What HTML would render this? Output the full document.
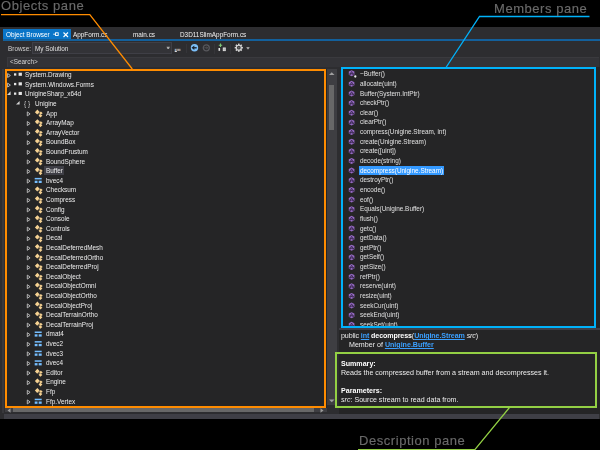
<!DOCTYPE html><html><head><meta charset="utf-8"><style>
*{margin:0;padding:0;box-sizing:border-box}
html,body{width:600px;height:450px;overflow:hidden;background:#000}
body{position:relative;font-family:"Liberation Sans",sans-serif;color:#ececec;font-size:6.4px}
.a{position:absolute}
.t{position:absolute;white-space:nowrap;line-height:10px;height:10px;transform-origin:0 0;will-change:transform}
.ann{position:absolute;white-space:nowrap;color:#6a6a6a;font-size:13px;line-height:16px;letter-spacing:0.55px;will-change:transform;-webkit-text-stroke:0.15px #6a6a6a}
</style></head><body><div class="a" style="left:0;top:27px;width:600px;height:392px;background:#2d2d30"></div>
<div class="a" style="left:2.3px;top:69px;width:1.7px;height:344px;background:#38383c"></div>
<div class="a" style="left:4px;top:413.8px;width:595px;height:5.2px;background:#3f3f46"></div>
<div class="a" style="left:3px;top:29px;width:68px;height:11.5px;background:#0a75c8"></div>
<div class="a" style="left:3px;top:39.2px;width:597px;height:1.7px;background:#13609c"></div>
<div class="t" style="left:5.7px;top:30.08px;color:#fff">Object Browser</div>
<div class="t" style="left:73.3px;top:30.08px;color:#f1f1f1">AppForm.cs</div>
<div class="t" style="left:133px;top:30.08px;color:#f1f1f1">main.cs</div>
<div class="t" style="left:179.7px;top:30.08px;color:#f1f1f1">D3D11SlimAppForm.cs</div>
<div class="t" style="left:8px;top:43.58px;color:#d0d0d0">Browse:</div>
<div class="a" style="left:32px;top:42px;width:140px;height:12px;background:#333337;border:1px solid #3f3f46"></div>
<div class="t" style="left:35px;top:43.58px;color:#e0e0e0">My Solution</div>
<div class="a" style="left:186px;top:44px;width:1px;height:9px;background:#353539"></div>
<div class="a" style="left:214.3px;top:43.5px;width:1px;height:10px;background:#353539"></div>
<div class="a" style="left:230.3px;top:43.5px;width:1px;height:10px;background:#353539"></div>
<div class="a" style="left:7px;top:56.6px;width:592px;height:10.6px;background:#333337;border-top:1px solid #3a3a3e;border-left:1px solid #3a3a3e"></div>
<div class="t" style="left:9.7px;top:57.48px;color:#d6d6d6">&lt;Search&gt;</div>
<div class="a" style="left:5px;top:69px;width:322px;height:339px;background:#252526"></div>
<div class="a" style="left:327px;top:69px;width:10px;height:339px;background:#3e3e42"></div>
<div class="a" style="left:329.3px;top:85px;width:4.7px;height:45px;background:#686868"></div>
<div class="a" style="left:5px;top:408px;width:322px;height:4.2px;background:#3e3e42"></div>
<div class="a" style="left:13px;top:408.2px;width:300.5px;height:3.8px;background:#686868"></div>
<div class="t" style="left:25px;top:70.28px;">System.Drawing</div>
<div class="t" style="left:25px;top:79.88px;">System.Windows.Forms</div>
<div class="t" style="left:25px;top:89.48px;">UnigineSharp_x64d</div>
<div class="t" style="left:23.7px;top:99.08px;color:#c8c8c8">{ }</div>
<div class="t" style="left:35.3px;top:99.08px;">Unigine</div>
<div class="t" style="left:45.7px;top:108.68px;">App</div>
<div class="t" style="left:45.7px;top:118.28px;">ArrayMap</div>
<div class="t" style="left:45.7px;top:127.88px;">ArrayVector</div>
<div class="t" style="left:45.7px;top:137.48px;">BoundBox</div>
<div class="t" style="left:45.7px;top:147.08px;">BoundFrustum</div>
<div class="t" style="left:45.7px;top:156.68px;">BoundSphere</div>
<div class="a" style="left:44.3px;top:165.7px;width:19.4px;height:9px;background:#3f3f46"></div>
<div class="t" style="left:45.7px;top:166.28px;">Buffer</div>
<div class="t" style="left:45.7px;top:175.88px;">bvec4</div>
<div class="t" style="left:45.7px;top:185.48px;">Checksum</div>
<div class="t" style="left:45.7px;top:195.08px;">Compress</div>
<div class="t" style="left:45.7px;top:204.68px;">Config</div>
<div class="t" style="left:45.7px;top:214.28px;">Console</div>
<div class="t" style="left:45.7px;top:223.88px;">Controls</div>
<div class="t" style="left:45.7px;top:233.48px;">Decal</div>
<div class="t" style="left:45.7px;top:243.08px;">DecalDeferredMesh</div>
<div class="t" style="left:45.7px;top:252.68px;">DecalDeferredOrtho</div>
<div class="t" style="left:45.7px;top:262.28px;">DecalDeferredProj</div>
<div class="t" style="left:45.7px;top:271.88px;">DecalObject</div>
<div class="t" style="left:45.7px;top:281.48px;">DecalObjectOmni</div>
<div class="t" style="left:45.7px;top:291.08px;">DecalObjectOrtho</div>
<div class="t" style="left:45.7px;top:300.68px;">DecalObjectProj</div>
<div class="t" style="left:45.7px;top:310.28px;">DecalTerrainOrtho</div>
<div class="t" style="left:45.7px;top:319.88px;">DecalTerrainProj</div>
<div class="t" style="left:45.7px;top:329.48px;">dmat4</div>
<div class="t" style="left:45.7px;top:339.08px;">dvec2</div>
<div class="t" style="left:45.7px;top:348.68px;">dvec3</div>
<div class="t" style="left:45.7px;top:358.28px;">dvec4</div>
<div class="t" style="left:45.7px;top:367.88px;">Editor</div>
<div class="t" style="left:45.7px;top:377.48px;">Engine</div>
<div class="t" style="left:45.7px;top:387.08px;">Ffp</div>
<div class="t" style="left:45.7px;top:396.68px;">Ffp.Vertex</div>
<div class="a" style="left:341px;top:67px;width:259px;height:261px;background:#252526"></div>
<div class="t" style="left:360px;top:69.28px;color:#e0e0e0">~Buffer()</div>
<div class="t" style="left:360px;top:78.92px;color:#e0e0e0">allocate(uint)</div>
<div class="t" style="left:360px;top:88.56px;color:#e0e0e0">Buffer(System.IntPtr)</div>
<div class="t" style="left:360px;top:98.20px;color:#e0e0e0">checkPtr()</div>
<div class="t" style="left:360px;top:107.84px;color:#e0e0e0">clear()</div>
<div class="t" style="left:360px;top:117.48px;color:#e0e0e0">clearPtr()</div>
<div class="t" style="left:360px;top:127.12px;color:#e0e0e0">compress(Unigine.Stream, int)</div>
<div class="t" style="left:360px;top:136.76px;color:#e0e0e0">create(Unigine.Stream)</div>
<div class="t" style="left:360px;top:146.40px;color:#e0e0e0">create([uint])</div>
<div class="t" style="left:360px;top:156.04px;color:#e0e0e0">decode(string)</div>
<div class="a" style="left:359px;top:165.7px;width:84.8px;height:9.5px;background:#3399ff"></div>
<div class="t" style="left:360px;top:165.68px;color:#fff">decompress(Unigine.Stream)</div>
<div class="t" style="left:360px;top:175.32px;color:#e0e0e0">destroyPtr()</div>
<div class="t" style="left:360px;top:184.96px;color:#e0e0e0">encode()</div>
<div class="t" style="left:360px;top:194.60px;color:#e0e0e0">eof()</div>
<div class="t" style="left:360px;top:204.24px;color:#e0e0e0">Equals(Unigine.Buffer)</div>
<div class="t" style="left:360px;top:213.88px;color:#e0e0e0">flush()</div>
<div class="t" style="left:360px;top:223.52px;color:#e0e0e0">getc()</div>
<div class="t" style="left:360px;top:233.16px;color:#e0e0e0">getData()</div>
<div class="t" style="left:360px;top:242.80px;color:#e0e0e0">getPtr()</div>
<div class="t" style="left:360px;top:252.44px;color:#e0e0e0">getSelf()</div>
<div class="t" style="left:360px;top:262.08px;color:#e0e0e0">getSize()</div>
<div class="t" style="left:360px;top:271.72px;color:#e0e0e0">refPtr()</div>
<div class="t" style="left:360px;top:281.36px;color:#e0e0e0">reserve(uint)</div>
<div class="t" style="left:360px;top:291.00px;color:#e0e0e0">resize(uint)</div>
<div class="t" style="left:360px;top:300.64px;color:#e0e0e0">seekCur(uint)</div>
<div class="t" style="left:360px;top:310.28px;color:#e0e0e0">seekEnd(uint)</div>
<div class="t" style="left:360px;top:319.92px;color:#e0e0e0">seekSet(uint)</div>
<div class="a" style="left:338.6px;top:328.2px;width:261.4px;height:1.6px;background:#3f3f46"></div>
<div class="a" style="left:338.6px;top:329.8px;width:261.4px;height:84px;background:#252526"></div>
<div class="a" style="left:327px;top:330px;width:8px;height:75px;background:#3e3e42"></div>
<div class="a" style="left:327px;top:405px;width:8px;height:8.8px;background:#2d2d30"></div>
<div class="t" style="left:340.5px;top:331.04px;font-size:7.1px;letter-spacing:-0.1px">public <b style="color:#3ba0ff;text-decoration:underline">int</b> <b style="color:#fff">decompress</b>(<b style="color:#3ba0ff;text-decoration:underline">Unigine.Stream</b> <i>src</i>)</div>
<div class="t" style="left:349px;top:339.54px;font-size:7.1px;">Member of <b style="color:#3ba0ff;text-decoration:underline">Unigine.Buffer</b></div>
<div class="t" style="left:340.5px;top:358.74px;font-size:7.1px;"><b style="color:#fff">Summary:</b></div>
<div class="t" style="left:340.5px;top:368.04px;font-size:7.1px;">Reads the compressed buffer from a stream and decompresses it.</div>
<div class="t" style="left:340.5px;top:385.79px;font-size:7.1px;"><b style="color:#fff">Parameters:</b></div>
<div class="t" style="left:340.5px;top:394.94px;font-size:7.1px;"><i>src</i>: Source stream to read data from.</div>
<svg class="a" style="left:0;top:0" width="600" height="450"><g transform="translate(52.00 31.00)"><path d="M1.2 3.2H3.5" stroke="#fff" stroke-width="0.9"/><rect x="3.5" y="1.8" width="2.7" height="2.7" stroke="#fff" stroke-width="0.9" fill="none"/><path d="M11.5 1.5L16 6M16 1.5L11.5 6" stroke="#fff" stroke-width="1.1"/></g><g transform="translate(166.50 46.60)"><path d="M0 0.2H3.4L2.4 2.5H1Z" fill="#a8a8a8"/></g><g transform="translate(174.70 48.80)"><rect x="0" y="0" width="1.6" height="2.2" fill="#7d9bbd"/><rect x="1.6" y="0" width="1.5" height="2.2" fill="#a58e7a"/><rect x="3.1" y="0" width="1.3" height="2.2" fill="#8e969e"/><rect x="4.4" y="0" width="1.4" height="2.2" fill="#a89080"/><rect x="0" y="2.2" width="2.2" height="1" fill="#d8d8d8"/></g><g transform="translate(190.00 44.00)"><circle cx="4.5" cy="3.8" r="3.7" fill="#7cc0fa"/><path d="M1.5 3.8L4.3 1.5V6.1Z" fill="#1a2430"/><rect x="4" y="3.1" width="2.7" height="1.4" fill="#1a2430"/></g><g transform="translate(202.00 44.00)"><circle cx="4.3" cy="3.8" r="3.0" fill="none" stroke="#58585c" stroke-width="1.3"/><path d="M6.4 3.8L4.3 2.2V5.4Z" fill="#505054"/><rect x="2.3" y="3.3" width="2.2" height="1" fill="#505054"/></g><g transform="translate(217.00 43.00)"><path d="M3.5 0.6V4M1.8 2.3H5.2" stroke="#7cc576" stroke-width="1.1"/><rect x="1.5" y="5" width="1.6" height="2.8" fill="#e8e8e8"/><rect x="5.8" y="4.5" width="3" height="3.6" fill="#e0e0e0"/><path d="M5.8 6.3H8.8M7.3 4.5V8.1" stroke="#9a9a9a" stroke-width="0.4"/></g><g transform="translate(234.30 43.20)"><g fill="#d4d4d4"><circle cx="4.5" cy="4.5" r="3"/><rect x="3.7" y="0.4" width="1.6" height="8.2"/><rect x="0.4" y="3.7" width="8.2" height="1.6"/><rect x="3.7" y="0.4" width="1.6" height="8.2" transform="rotate(45 4.5 4.5)"/><rect x="3.7" y="0.4" width="1.6" height="8.2" transform="rotate(-45 4.5 4.5)"/></g><circle cx="4.5" cy="4.5" r="1.9" fill="#3a3a3c"/><circle cx="4.5" cy="4.5" r="0.8" fill="#777"/></g><g transform="translate(246.30 46.80)"><path d="M0 0.2H3.4L2.4 2.4H1Z" fill="#9a9a9a"/></g><g transform="translate(329.00 72.00)"><path d="M0 3L2.75 0.3L5.5 3Z" fill="#a0a0a0"/></g><g transform="translate(7.00 408.00)"><path d="M3.5 0.2V4.8L0.5 2.5Z" fill="#999"/></g><g transform="translate(320.00 408.00)"><path d="M0.5 0.2V4.8L3.5 2.5Z" fill="#999"/></g><g transform="translate(7.00 72.90)"><path d="M0.6 0.6L3.4 2.6L0.6 4.6Z" fill="none" stroke="#b4b4b4" stroke-width="1"/></g><g transform="translate(14.00 72.70)"><rect x="0" y="0.6" width="2.3" height="2.3" fill="#e4e4e4"/><rect x="4.6" y="0" width="3.3" height="3.1" fill="#e4e4e4"/></g><g transform="translate(7.00 82.50)"><path d="M0.6 0.6L3.4 2.6L0.6 4.6Z" fill="none" stroke="#b4b4b4" stroke-width="1"/></g><g transform="translate(14.00 82.30)"><rect x="0" y="0.6" width="2.3" height="2.3" fill="#e4e4e4"/><rect x="4.6" y="0" width="3.3" height="3.1" fill="#e4e4e4"/></g><g transform="translate(6.80 91.10)"><path d="M3.8 0.2V3.8H0.2Z" fill="#d4d4d4"/></g><g transform="translate(14.00 91.90)"><rect x="0" y="0.6" width="2.3" height="2.3" fill="#e4e4e4"/><rect x="4.6" y="0" width="3.3" height="3.1" fill="#e4e4e4"/></g><g transform="translate(15.80 100.70)"><path d="M3.8 0.2V3.8H0.2Z" fill="#d4d4d4"/></g><g transform="translate(26.70 111.30)"><path d="M0.6 0.6L3.4 2.6L0.6 4.6Z" fill="none" stroke="#b4b4b4" stroke-width="1"/></g><g transform="translate(34.70 109.40)"><path d="M0.2 2.8L2.7 0.2L5 2.6L2.5 5.2Z" fill="#f6d292"/><path d="M4.4 3.6L6.2 2.2L8 3.9L6.2 5.2Z" fill="#f6d292"/><path d="M3.9 6.1L5.7 4.6L7.7 6.3L5.6 8.2Z" fill="#f6d292"/><path d="M3.6 4.2L5.4 5.6" stroke="#b89a6a" stroke-width="0.7"/></g><g transform="translate(26.70 120.90)"><path d="M0.6 0.6L3.4 2.6L0.6 4.6Z" fill="none" stroke="#b4b4b4" stroke-width="1"/></g><g transform="translate(34.70 119.00)"><path d="M0.2 2.8L2.7 0.2L5 2.6L2.5 5.2Z" fill="#f6d292"/><path d="M4.4 3.6L6.2 2.2L8 3.9L6.2 5.2Z" fill="#f6d292"/><path d="M3.9 6.1L5.7 4.6L7.7 6.3L5.6 8.2Z" fill="#f6d292"/><path d="M3.6 4.2L5.4 5.6" stroke="#b89a6a" stroke-width="0.7"/></g><g transform="translate(26.70 130.50)"><path d="M0.6 0.6L3.4 2.6L0.6 4.6Z" fill="none" stroke="#b4b4b4" stroke-width="1"/></g><g transform="translate(34.70 128.60)"><path d="M0.2 2.8L2.7 0.2L5 2.6L2.5 5.2Z" fill="#f6d292"/><path d="M4.4 3.6L6.2 2.2L8 3.9L6.2 5.2Z" fill="#f6d292"/><path d="M3.9 6.1L5.7 4.6L7.7 6.3L5.6 8.2Z" fill="#f6d292"/><path d="M3.6 4.2L5.4 5.6" stroke="#b89a6a" stroke-width="0.7"/></g><g transform="translate(26.70 140.10)"><path d="M0.6 0.6L3.4 2.6L0.6 4.6Z" fill="none" stroke="#b4b4b4" stroke-width="1"/></g><g transform="translate(34.70 138.20)"><path d="M0.2 2.8L2.7 0.2L5 2.6L2.5 5.2Z" fill="#f6d292"/><path d="M4.4 3.6L6.2 2.2L8 3.9L6.2 5.2Z" fill="#f6d292"/><path d="M3.9 6.1L5.7 4.6L7.7 6.3L5.6 8.2Z" fill="#f6d292"/><path d="M3.6 4.2L5.4 5.6" stroke="#b89a6a" stroke-width="0.7"/></g><g transform="translate(26.70 149.70)"><path d="M0.6 0.6L3.4 2.6L0.6 4.6Z" fill="none" stroke="#b4b4b4" stroke-width="1"/></g><g transform="translate(34.70 147.80)"><path d="M0.2 2.8L2.7 0.2L5 2.6L2.5 5.2Z" fill="#f6d292"/><path d="M4.4 3.6L6.2 2.2L8 3.9L6.2 5.2Z" fill="#f6d292"/><path d="M3.9 6.1L5.7 4.6L7.7 6.3L5.6 8.2Z" fill="#f6d292"/><path d="M3.6 4.2L5.4 5.6" stroke="#b89a6a" stroke-width="0.7"/></g><g transform="translate(26.70 159.30)"><path d="M0.6 0.6L3.4 2.6L0.6 4.6Z" fill="none" stroke="#b4b4b4" stroke-width="1"/></g><g transform="translate(34.70 157.40)"><path d="M0.2 2.8L2.7 0.2L5 2.6L2.5 5.2Z" fill="#f6d292"/><path d="M4.4 3.6L6.2 2.2L8 3.9L6.2 5.2Z" fill="#f6d292"/><path d="M3.9 6.1L5.7 4.6L7.7 6.3L5.6 8.2Z" fill="#f6d292"/><path d="M3.6 4.2L5.4 5.6" stroke="#b89a6a" stroke-width="0.7"/></g><g transform="translate(26.70 168.90)"><path d="M0.6 0.6L3.4 2.6L0.6 4.6Z" fill="none" stroke="#b4b4b4" stroke-width="1"/></g><g transform="translate(34.70 167.00)"><path d="M0.2 2.8L2.7 0.2L5 2.6L2.5 5.2Z" fill="#f6d292"/><path d="M4.4 3.6L6.2 2.2L8 3.9L6.2 5.2Z" fill="#f6d292"/><path d="M3.9 6.1L5.7 4.6L7.7 6.3L5.6 8.2Z" fill="#f6d292"/><path d="M3.6 4.2L5.4 5.6" stroke="#b89a6a" stroke-width="0.7"/></g><g transform="translate(26.70 178.50)"><path d="M0.6 0.6L3.4 2.6L0.6 4.6Z" fill="none" stroke="#b4b4b4" stroke-width="1"/></g><g transform="translate(34.70 177.70)"><rect x="0" y="0.2" width="7" height="1.5" fill="#75beff"/><rect x="0" y="3" width="2.8" height="2.3" fill="#75beff"/><rect x="4" y="3" width="3" height="2.3" fill="#75beff"/></g><g transform="translate(26.70 188.10)"><path d="M0.6 0.6L3.4 2.6L0.6 4.6Z" fill="none" stroke="#b4b4b4" stroke-width="1"/></g><g transform="translate(34.70 186.20)"><path d="M0.2 2.8L2.7 0.2L5 2.6L2.5 5.2Z" fill="#f6d292"/><path d="M4.4 3.6L6.2 2.2L8 3.9L6.2 5.2Z" fill="#f6d292"/><path d="M3.9 6.1L5.7 4.6L7.7 6.3L5.6 8.2Z" fill="#f6d292"/><path d="M3.6 4.2L5.4 5.6" stroke="#b89a6a" stroke-width="0.7"/></g><g transform="translate(26.70 197.70)"><path d="M0.6 0.6L3.4 2.6L0.6 4.6Z" fill="none" stroke="#b4b4b4" stroke-width="1"/></g><g transform="translate(34.70 195.80)"><path d="M0.2 2.8L2.7 0.2L5 2.6L2.5 5.2Z" fill="#f6d292"/><path d="M4.4 3.6L6.2 2.2L8 3.9L6.2 5.2Z" fill="#f6d292"/><path d="M3.9 6.1L5.7 4.6L7.7 6.3L5.6 8.2Z" fill="#f6d292"/><path d="M3.6 4.2L5.4 5.6" stroke="#b89a6a" stroke-width="0.7"/></g><g transform="translate(26.70 207.30)"><path d="M0.6 0.6L3.4 2.6L0.6 4.6Z" fill="none" stroke="#b4b4b4" stroke-width="1"/></g><g transform="translate(34.70 205.40)"><path d="M0.2 2.8L2.7 0.2L5 2.6L2.5 5.2Z" fill="#f6d292"/><path d="M4.4 3.6L6.2 2.2L8 3.9L6.2 5.2Z" fill="#f6d292"/><path d="M3.9 6.1L5.7 4.6L7.7 6.3L5.6 8.2Z" fill="#f6d292"/><path d="M3.6 4.2L5.4 5.6" stroke="#b89a6a" stroke-width="0.7"/></g><g transform="translate(26.70 216.90)"><path d="M0.6 0.6L3.4 2.6L0.6 4.6Z" fill="none" stroke="#b4b4b4" stroke-width="1"/></g><g transform="translate(34.70 215.00)"><path d="M0.2 2.8L2.7 0.2L5 2.6L2.5 5.2Z" fill="#f6d292"/><path d="M4.4 3.6L6.2 2.2L8 3.9L6.2 5.2Z" fill="#f6d292"/><path d="M3.9 6.1L5.7 4.6L7.7 6.3L5.6 8.2Z" fill="#f6d292"/><path d="M3.6 4.2L5.4 5.6" stroke="#b89a6a" stroke-width="0.7"/></g><g transform="translate(26.70 226.50)"><path d="M0.6 0.6L3.4 2.6L0.6 4.6Z" fill="none" stroke="#b4b4b4" stroke-width="1"/></g><g transform="translate(34.70 224.60)"><path d="M0.2 2.8L2.7 0.2L5 2.6L2.5 5.2Z" fill="#f6d292"/><path d="M4.4 3.6L6.2 2.2L8 3.9L6.2 5.2Z" fill="#f6d292"/><path d="M3.9 6.1L5.7 4.6L7.7 6.3L5.6 8.2Z" fill="#f6d292"/><path d="M3.6 4.2L5.4 5.6" stroke="#b89a6a" stroke-width="0.7"/></g><g transform="translate(26.70 236.10)"><path d="M0.6 0.6L3.4 2.6L0.6 4.6Z" fill="none" stroke="#b4b4b4" stroke-width="1"/></g><g transform="translate(34.70 234.20)"><path d="M0.2 2.8L2.7 0.2L5 2.6L2.5 5.2Z" fill="#f6d292"/><path d="M4.4 3.6L6.2 2.2L8 3.9L6.2 5.2Z" fill="#f6d292"/><path d="M3.9 6.1L5.7 4.6L7.7 6.3L5.6 8.2Z" fill="#f6d292"/><path d="M3.6 4.2L5.4 5.6" stroke="#b89a6a" stroke-width="0.7"/></g><g transform="translate(26.70 245.70)"><path d="M0.6 0.6L3.4 2.6L0.6 4.6Z" fill="none" stroke="#b4b4b4" stroke-width="1"/></g><g transform="translate(34.70 243.80)"><path d="M0.2 2.8L2.7 0.2L5 2.6L2.5 5.2Z" fill="#f6d292"/><path d="M4.4 3.6L6.2 2.2L8 3.9L6.2 5.2Z" fill="#f6d292"/><path d="M3.9 6.1L5.7 4.6L7.7 6.3L5.6 8.2Z" fill="#f6d292"/><path d="M3.6 4.2L5.4 5.6" stroke="#b89a6a" stroke-width="0.7"/></g><g transform="translate(26.70 255.30)"><path d="M0.6 0.6L3.4 2.6L0.6 4.6Z" fill="none" stroke="#b4b4b4" stroke-width="1"/></g><g transform="translate(34.70 253.40)"><path d="M0.2 2.8L2.7 0.2L5 2.6L2.5 5.2Z" fill="#f6d292"/><path d="M4.4 3.6L6.2 2.2L8 3.9L6.2 5.2Z" fill="#f6d292"/><path d="M3.9 6.1L5.7 4.6L7.7 6.3L5.6 8.2Z" fill="#f6d292"/><path d="M3.6 4.2L5.4 5.6" stroke="#b89a6a" stroke-width="0.7"/></g><g transform="translate(26.70 264.90)"><path d="M0.6 0.6L3.4 2.6L0.6 4.6Z" fill="none" stroke="#b4b4b4" stroke-width="1"/></g><g transform="translate(34.70 263.00)"><path d="M0.2 2.8L2.7 0.2L5 2.6L2.5 5.2Z" fill="#f6d292"/><path d="M4.4 3.6L6.2 2.2L8 3.9L6.2 5.2Z" fill="#f6d292"/><path d="M3.9 6.1L5.7 4.6L7.7 6.3L5.6 8.2Z" fill="#f6d292"/><path d="M3.6 4.2L5.4 5.6" stroke="#b89a6a" stroke-width="0.7"/></g><g transform="translate(26.70 274.50)"><path d="M0.6 0.6L3.4 2.6L0.6 4.6Z" fill="none" stroke="#b4b4b4" stroke-width="1"/></g><g transform="translate(34.70 272.60)"><path d="M0.2 2.8L2.7 0.2L5 2.6L2.5 5.2Z" fill="#f6d292"/><path d="M4.4 3.6L6.2 2.2L8 3.9L6.2 5.2Z" fill="#f6d292"/><path d="M3.9 6.1L5.7 4.6L7.7 6.3L5.6 8.2Z" fill="#f6d292"/><path d="M3.6 4.2L5.4 5.6" stroke="#b89a6a" stroke-width="0.7"/></g><g transform="translate(26.70 284.10)"><path d="M0.6 0.6L3.4 2.6L0.6 4.6Z" fill="none" stroke="#b4b4b4" stroke-width="1"/></g><g transform="translate(34.70 282.20)"><path d="M0.2 2.8L2.7 0.2L5 2.6L2.5 5.2Z" fill="#f6d292"/><path d="M4.4 3.6L6.2 2.2L8 3.9L6.2 5.2Z" fill="#f6d292"/><path d="M3.9 6.1L5.7 4.6L7.7 6.3L5.6 8.2Z" fill="#f6d292"/><path d="M3.6 4.2L5.4 5.6" stroke="#b89a6a" stroke-width="0.7"/></g><g transform="translate(26.70 293.70)"><path d="M0.6 0.6L3.4 2.6L0.6 4.6Z" fill="none" stroke="#b4b4b4" stroke-width="1"/></g><g transform="translate(34.70 291.80)"><path d="M0.2 2.8L2.7 0.2L5 2.6L2.5 5.2Z" fill="#f6d292"/><path d="M4.4 3.6L6.2 2.2L8 3.9L6.2 5.2Z" fill="#f6d292"/><path d="M3.9 6.1L5.7 4.6L7.7 6.3L5.6 8.2Z" fill="#f6d292"/><path d="M3.6 4.2L5.4 5.6" stroke="#b89a6a" stroke-width="0.7"/></g><g transform="translate(26.70 303.30)"><path d="M0.6 0.6L3.4 2.6L0.6 4.6Z" fill="none" stroke="#b4b4b4" stroke-width="1"/></g><g transform="translate(34.70 301.40)"><path d="M0.2 2.8L2.7 0.2L5 2.6L2.5 5.2Z" fill="#f6d292"/><path d="M4.4 3.6L6.2 2.2L8 3.9L6.2 5.2Z" fill="#f6d292"/><path d="M3.9 6.1L5.7 4.6L7.7 6.3L5.6 8.2Z" fill="#f6d292"/><path d="M3.6 4.2L5.4 5.6" stroke="#b89a6a" stroke-width="0.7"/></g><g transform="translate(26.70 312.90)"><path d="M0.6 0.6L3.4 2.6L0.6 4.6Z" fill="none" stroke="#b4b4b4" stroke-width="1"/></g><g transform="translate(34.70 311.00)"><path d="M0.2 2.8L2.7 0.2L5 2.6L2.5 5.2Z" fill="#f6d292"/><path d="M4.4 3.6L6.2 2.2L8 3.9L6.2 5.2Z" fill="#f6d292"/><path d="M3.9 6.1L5.7 4.6L7.7 6.3L5.6 8.2Z" fill="#f6d292"/><path d="M3.6 4.2L5.4 5.6" stroke="#b89a6a" stroke-width="0.7"/></g><g transform="translate(26.70 322.50)"><path d="M0.6 0.6L3.4 2.6L0.6 4.6Z" fill="none" stroke="#b4b4b4" stroke-width="1"/></g><g transform="translate(34.70 320.60)"><path d="M0.2 2.8L2.7 0.2L5 2.6L2.5 5.2Z" fill="#f6d292"/><path d="M4.4 3.6L6.2 2.2L8 3.9L6.2 5.2Z" fill="#f6d292"/><path d="M3.9 6.1L5.7 4.6L7.7 6.3L5.6 8.2Z" fill="#f6d292"/><path d="M3.6 4.2L5.4 5.6" stroke="#b89a6a" stroke-width="0.7"/></g><g transform="translate(26.70 332.10)"><path d="M0.6 0.6L3.4 2.6L0.6 4.6Z" fill="none" stroke="#b4b4b4" stroke-width="1"/></g><g transform="translate(34.70 331.30)"><rect x="0" y="0.2" width="7" height="1.5" fill="#75beff"/><rect x="0" y="3" width="2.8" height="2.3" fill="#75beff"/><rect x="4" y="3" width="3" height="2.3" fill="#75beff"/></g><g transform="translate(26.70 341.70)"><path d="M0.6 0.6L3.4 2.6L0.6 4.6Z" fill="none" stroke="#b4b4b4" stroke-width="1"/></g><g transform="translate(34.70 340.90)"><rect x="0" y="0.2" width="7" height="1.5" fill="#75beff"/><rect x="0" y="3" width="2.8" height="2.3" fill="#75beff"/><rect x="4" y="3" width="3" height="2.3" fill="#75beff"/></g><g transform="translate(26.70 351.30)"><path d="M0.6 0.6L3.4 2.6L0.6 4.6Z" fill="none" stroke="#b4b4b4" stroke-width="1"/></g><g transform="translate(34.70 350.50)"><rect x="0" y="0.2" width="7" height="1.5" fill="#75beff"/><rect x="0" y="3" width="2.8" height="2.3" fill="#75beff"/><rect x="4" y="3" width="3" height="2.3" fill="#75beff"/></g><g transform="translate(26.70 360.90)"><path d="M0.6 0.6L3.4 2.6L0.6 4.6Z" fill="none" stroke="#b4b4b4" stroke-width="1"/></g><g transform="translate(34.70 360.10)"><rect x="0" y="0.2" width="7" height="1.5" fill="#75beff"/><rect x="0" y="3" width="2.8" height="2.3" fill="#75beff"/><rect x="4" y="3" width="3" height="2.3" fill="#75beff"/></g><g transform="translate(26.70 370.50)"><path d="M0.6 0.6L3.4 2.6L0.6 4.6Z" fill="none" stroke="#b4b4b4" stroke-width="1"/></g><g transform="translate(34.70 368.60)"><path d="M0.2 2.8L2.7 0.2L5 2.6L2.5 5.2Z" fill="#f6d292"/><path d="M4.4 3.6L6.2 2.2L8 3.9L6.2 5.2Z" fill="#f6d292"/><path d="M3.9 6.1L5.7 4.6L7.7 6.3L5.6 8.2Z" fill="#f6d292"/><path d="M3.6 4.2L5.4 5.6" stroke="#b89a6a" stroke-width="0.7"/></g><g transform="translate(26.70 380.10)"><path d="M0.6 0.6L3.4 2.6L0.6 4.6Z" fill="none" stroke="#b4b4b4" stroke-width="1"/></g><g transform="translate(34.70 378.20)"><path d="M0.2 2.8L2.7 0.2L5 2.6L2.5 5.2Z" fill="#f6d292"/><path d="M4.4 3.6L6.2 2.2L8 3.9L6.2 5.2Z" fill="#f6d292"/><path d="M3.9 6.1L5.7 4.6L7.7 6.3L5.6 8.2Z" fill="#f6d292"/><path d="M3.6 4.2L5.4 5.6" stroke="#b89a6a" stroke-width="0.7"/></g><g transform="translate(26.70 389.70)"><path d="M0.6 0.6L3.4 2.6L0.6 4.6Z" fill="none" stroke="#b4b4b4" stroke-width="1"/></g><g transform="translate(34.70 387.80)"><path d="M0.2 2.8L2.7 0.2L5 2.6L2.5 5.2Z" fill="#f6d292"/><path d="M4.4 3.6L6.2 2.2L8 3.9L6.2 5.2Z" fill="#f6d292"/><path d="M3.9 6.1L5.7 4.6L7.7 6.3L5.6 8.2Z" fill="#f6d292"/><path d="M3.6 4.2L5.4 5.6" stroke="#b89a6a" stroke-width="0.7"/></g><g transform="translate(26.70 399.30)"><path d="M0.6 0.6L3.4 2.6L0.6 4.6Z" fill="none" stroke="#b4b4b4" stroke-width="1"/></g><g transform="translate(34.70 398.50)"><rect x="0" y="0.2" width="7" height="1.5" fill="#75beff"/><rect x="0" y="3" width="2.8" height="2.3" fill="#75beff"/><rect x="4" y="3" width="3" height="2.3" fill="#75beff"/></g><g transform="translate(348.60 70.10)"><path d="M3 0.1L5.8 1.5V4.6L3 6.1L0.2 4.6V1.5Z" fill="#966ac4"/><path d="M1.5 4.1L3 1.4L4.5 4.1" stroke="#3a2850" stroke-width="0.9" fill="none"/><circle cx="1.5" cy="4" r="0.85" fill="#3a2850"/><circle cx="4.5" cy="4" r="0.85" fill="#3a2850"/><circle cx="3" cy="3.6" r="0.6" fill="#3a2850"/></g><g transform="translate(348.60 80.74)"><path d="M3 0.1L5.8 1.5V4.6L3 6.1L0.2 4.6V1.5Z" fill="#966ac4"/><path d="M1.5 4.1L3 1.4L4.5 4.1" stroke="#3a2850" stroke-width="0.9" fill="none"/><circle cx="1.5" cy="4" r="0.85" fill="#3a2850"/><circle cx="4.5" cy="4" r="0.85" fill="#3a2850"/><circle cx="3" cy="3.6" r="0.6" fill="#3a2850"/></g><g transform="translate(348.60 90.38)"><path d="M3 0.1L5.8 1.5V4.6L3 6.1L0.2 4.6V1.5Z" fill="#966ac4"/><path d="M1.5 4.1L3 1.4L4.5 4.1" stroke="#3a2850" stroke-width="0.9" fill="none"/><circle cx="1.5" cy="4" r="0.85" fill="#3a2850"/><circle cx="4.5" cy="4" r="0.85" fill="#3a2850"/><circle cx="3" cy="3.6" r="0.6" fill="#3a2850"/></g><g transform="translate(348.60 100.02)"><path d="M3 0.1L5.8 1.5V4.6L3 6.1L0.2 4.6V1.5Z" fill="#966ac4"/><path d="M1.5 4.1L3 1.4L4.5 4.1" stroke="#3a2850" stroke-width="0.9" fill="none"/><circle cx="1.5" cy="4" r="0.85" fill="#3a2850"/><circle cx="4.5" cy="4" r="0.85" fill="#3a2850"/><circle cx="3" cy="3.6" r="0.6" fill="#3a2850"/></g><g transform="translate(348.60 109.66)"><path d="M3 0.1L5.8 1.5V4.6L3 6.1L0.2 4.6V1.5Z" fill="#966ac4"/><path d="M1.5 4.1L3 1.4L4.5 4.1" stroke="#3a2850" stroke-width="0.9" fill="none"/><circle cx="1.5" cy="4" r="0.85" fill="#3a2850"/><circle cx="4.5" cy="4" r="0.85" fill="#3a2850"/><circle cx="3" cy="3.6" r="0.6" fill="#3a2850"/></g><g transform="translate(348.60 119.30)"><path d="M3 0.1L5.8 1.5V4.6L3 6.1L0.2 4.6V1.5Z" fill="#966ac4"/><path d="M1.5 4.1L3 1.4L4.5 4.1" stroke="#3a2850" stroke-width="0.9" fill="none"/><circle cx="1.5" cy="4" r="0.85" fill="#3a2850"/><circle cx="4.5" cy="4" r="0.85" fill="#3a2850"/><circle cx="3" cy="3.6" r="0.6" fill="#3a2850"/></g><g transform="translate(348.60 128.94)"><path d="M3 0.1L5.8 1.5V4.6L3 6.1L0.2 4.6V1.5Z" fill="#966ac4"/><path d="M1.5 4.1L3 1.4L4.5 4.1" stroke="#3a2850" stroke-width="0.9" fill="none"/><circle cx="1.5" cy="4" r="0.85" fill="#3a2850"/><circle cx="4.5" cy="4" r="0.85" fill="#3a2850"/><circle cx="3" cy="3.6" r="0.6" fill="#3a2850"/></g><g transform="translate(348.60 138.58)"><path d="M3 0.1L5.8 1.5V4.6L3 6.1L0.2 4.6V1.5Z" fill="#966ac4"/><path d="M1.5 4.1L3 1.4L4.5 4.1" stroke="#3a2850" stroke-width="0.9" fill="none"/><circle cx="1.5" cy="4" r="0.85" fill="#3a2850"/><circle cx="4.5" cy="4" r="0.85" fill="#3a2850"/><circle cx="3" cy="3.6" r="0.6" fill="#3a2850"/></g><g transform="translate(348.60 148.22)"><path d="M3 0.1L5.8 1.5V4.6L3 6.1L0.2 4.6V1.5Z" fill="#966ac4"/><path d="M1.5 4.1L3 1.4L4.5 4.1" stroke="#3a2850" stroke-width="0.9" fill="none"/><circle cx="1.5" cy="4" r="0.85" fill="#3a2850"/><circle cx="4.5" cy="4" r="0.85" fill="#3a2850"/><circle cx="3" cy="3.6" r="0.6" fill="#3a2850"/></g><g transform="translate(348.60 157.86)"><path d="M3 0.1L5.8 1.5V4.6L3 6.1L0.2 4.6V1.5Z" fill="#966ac4"/><path d="M1.5 4.1L3 1.4L4.5 4.1" stroke="#3a2850" stroke-width="0.9" fill="none"/><circle cx="1.5" cy="4" r="0.85" fill="#3a2850"/><circle cx="4.5" cy="4" r="0.85" fill="#3a2850"/><circle cx="3" cy="3.6" r="0.6" fill="#3a2850"/></g><g transform="translate(348.60 167.50)"><path d="M3 0.1L5.8 1.5V4.6L3 6.1L0.2 4.6V1.5Z" fill="#966ac4"/><path d="M1.5 4.1L3 1.4L4.5 4.1" stroke="#3a2850" stroke-width="0.9" fill="none"/><circle cx="1.5" cy="4" r="0.85" fill="#3a2850"/><circle cx="4.5" cy="4" r="0.85" fill="#3a2850"/><circle cx="3" cy="3.6" r="0.6" fill="#3a2850"/></g><g transform="translate(348.60 177.14)"><path d="M3 0.1L5.8 1.5V4.6L3 6.1L0.2 4.6V1.5Z" fill="#966ac4"/><path d="M1.5 4.1L3 1.4L4.5 4.1" stroke="#3a2850" stroke-width="0.9" fill="none"/><circle cx="1.5" cy="4" r="0.85" fill="#3a2850"/><circle cx="4.5" cy="4" r="0.85" fill="#3a2850"/><circle cx="3" cy="3.6" r="0.6" fill="#3a2850"/></g><g transform="translate(348.60 186.78)"><path d="M3 0.1L5.8 1.5V4.6L3 6.1L0.2 4.6V1.5Z" fill="#966ac4"/><path d="M1.5 4.1L3 1.4L4.5 4.1" stroke="#3a2850" stroke-width="0.9" fill="none"/><circle cx="1.5" cy="4" r="0.85" fill="#3a2850"/><circle cx="4.5" cy="4" r="0.85" fill="#3a2850"/><circle cx="3" cy="3.6" r="0.6" fill="#3a2850"/></g><g transform="translate(348.60 196.42)"><path d="M3 0.1L5.8 1.5V4.6L3 6.1L0.2 4.6V1.5Z" fill="#966ac4"/><path d="M1.5 4.1L3 1.4L4.5 4.1" stroke="#3a2850" stroke-width="0.9" fill="none"/><circle cx="1.5" cy="4" r="0.85" fill="#3a2850"/><circle cx="4.5" cy="4" r="0.85" fill="#3a2850"/><circle cx="3" cy="3.6" r="0.6" fill="#3a2850"/></g><g transform="translate(348.60 206.06)"><path d="M3 0.1L5.8 1.5V4.6L3 6.1L0.2 4.6V1.5Z" fill="#966ac4"/><path d="M1.5 4.1L3 1.4L4.5 4.1" stroke="#3a2850" stroke-width="0.9" fill="none"/><circle cx="1.5" cy="4" r="0.85" fill="#3a2850"/><circle cx="4.5" cy="4" r="0.85" fill="#3a2850"/><circle cx="3" cy="3.6" r="0.6" fill="#3a2850"/></g><g transform="translate(348.60 215.70)"><path d="M3 0.1L5.8 1.5V4.6L3 6.1L0.2 4.6V1.5Z" fill="#966ac4"/><path d="M1.5 4.1L3 1.4L4.5 4.1" stroke="#3a2850" stroke-width="0.9" fill="none"/><circle cx="1.5" cy="4" r="0.85" fill="#3a2850"/><circle cx="4.5" cy="4" r="0.85" fill="#3a2850"/><circle cx="3" cy="3.6" r="0.6" fill="#3a2850"/></g><g transform="translate(348.60 225.34)"><path d="M3 0.1L5.8 1.5V4.6L3 6.1L0.2 4.6V1.5Z" fill="#966ac4"/><path d="M1.5 4.1L3 1.4L4.5 4.1" stroke="#3a2850" stroke-width="0.9" fill="none"/><circle cx="1.5" cy="4" r="0.85" fill="#3a2850"/><circle cx="4.5" cy="4" r="0.85" fill="#3a2850"/><circle cx="3" cy="3.6" r="0.6" fill="#3a2850"/></g><g transform="translate(348.60 234.98)"><path d="M3 0.1L5.8 1.5V4.6L3 6.1L0.2 4.6V1.5Z" fill="#966ac4"/><path d="M1.5 4.1L3 1.4L4.5 4.1" stroke="#3a2850" stroke-width="0.9" fill="none"/><circle cx="1.5" cy="4" r="0.85" fill="#3a2850"/><circle cx="4.5" cy="4" r="0.85" fill="#3a2850"/><circle cx="3" cy="3.6" r="0.6" fill="#3a2850"/></g><g transform="translate(348.60 244.62)"><path d="M3 0.1L5.8 1.5V4.6L3 6.1L0.2 4.6V1.5Z" fill="#966ac4"/><path d="M1.5 4.1L3 1.4L4.5 4.1" stroke="#3a2850" stroke-width="0.9" fill="none"/><circle cx="1.5" cy="4" r="0.85" fill="#3a2850"/><circle cx="4.5" cy="4" r="0.85" fill="#3a2850"/><circle cx="3" cy="3.6" r="0.6" fill="#3a2850"/></g><g transform="translate(348.60 254.26)"><path d="M3 0.1L5.8 1.5V4.6L3 6.1L0.2 4.6V1.5Z" fill="#966ac4"/><path d="M1.5 4.1L3 1.4L4.5 4.1" stroke="#3a2850" stroke-width="0.9" fill="none"/><circle cx="1.5" cy="4" r="0.85" fill="#3a2850"/><circle cx="4.5" cy="4" r="0.85" fill="#3a2850"/><circle cx="3" cy="3.6" r="0.6" fill="#3a2850"/></g><g transform="translate(348.60 263.90)"><path d="M3 0.1L5.8 1.5V4.6L3 6.1L0.2 4.6V1.5Z" fill="#966ac4"/><path d="M1.5 4.1L3 1.4L4.5 4.1" stroke="#3a2850" stroke-width="0.9" fill="none"/><circle cx="1.5" cy="4" r="0.85" fill="#3a2850"/><circle cx="4.5" cy="4" r="0.85" fill="#3a2850"/><circle cx="3" cy="3.6" r="0.6" fill="#3a2850"/></g><g transform="translate(348.60 273.54)"><path d="M3 0.1L5.8 1.5V4.6L3 6.1L0.2 4.6V1.5Z" fill="#966ac4"/><path d="M1.5 4.1L3 1.4L4.5 4.1" stroke="#3a2850" stroke-width="0.9" fill="none"/><circle cx="1.5" cy="4" r="0.85" fill="#3a2850"/><circle cx="4.5" cy="4" r="0.85" fill="#3a2850"/><circle cx="3" cy="3.6" r="0.6" fill="#3a2850"/></g><g transform="translate(348.60 283.18)"><path d="M3 0.1L5.8 1.5V4.6L3 6.1L0.2 4.6V1.5Z" fill="#966ac4"/><path d="M1.5 4.1L3 1.4L4.5 4.1" stroke="#3a2850" stroke-width="0.9" fill="none"/><circle cx="1.5" cy="4" r="0.85" fill="#3a2850"/><circle cx="4.5" cy="4" r="0.85" fill="#3a2850"/><circle cx="3" cy="3.6" r="0.6" fill="#3a2850"/></g><g transform="translate(348.60 292.82)"><path d="M3 0.1L5.8 1.5V4.6L3 6.1L0.2 4.6V1.5Z" fill="#966ac4"/><path d="M1.5 4.1L3 1.4L4.5 4.1" stroke="#3a2850" stroke-width="0.9" fill="none"/><circle cx="1.5" cy="4" r="0.85" fill="#3a2850"/><circle cx="4.5" cy="4" r="0.85" fill="#3a2850"/><circle cx="3" cy="3.6" r="0.6" fill="#3a2850"/></g><g transform="translate(348.60 302.46)"><path d="M3 0.1L5.8 1.5V4.6L3 6.1L0.2 4.6V1.5Z" fill="#966ac4"/><path d="M1.5 4.1L3 1.4L4.5 4.1" stroke="#3a2850" stroke-width="0.9" fill="none"/><circle cx="1.5" cy="4" r="0.85" fill="#3a2850"/><circle cx="4.5" cy="4" r="0.85" fill="#3a2850"/><circle cx="3" cy="3.6" r="0.6" fill="#3a2850"/></g><g transform="translate(348.60 312.10)"><path d="M3 0.1L5.8 1.5V4.6L3 6.1L0.2 4.6V1.5Z" fill="#966ac4"/><path d="M1.5 4.1L3 1.4L4.5 4.1" stroke="#3a2850" stroke-width="0.9" fill="none"/><circle cx="1.5" cy="4" r="0.85" fill="#3a2850"/><circle cx="4.5" cy="4" r="0.85" fill="#3a2850"/><circle cx="3" cy="3.6" r="0.6" fill="#3a2850"/></g><g transform="translate(348.60 321.74)"><path d="M3 0.1L5.8 1.5V4.6L3 6.1L0.2 4.6V1.5Z" fill="#966ac4"/><path d="M1.5 4.1L3 1.4L4.5 4.1" stroke="#3a2850" stroke-width="0.9" fill="none"/><circle cx="1.5" cy="4" r="0.85" fill="#3a2850"/><circle cx="4.5" cy="4" r="0.85" fill="#3a2850"/><circle cx="3" cy="3.6" r="0.6" fill="#3a2850"/></g><g transform="translate(355.30 76.50)"><circle cx="0" cy="0" r="1.15" fill="#e8e8e8"/></g><g transform="translate(329.00 399.20)"><path d="M0 0.3H5.5L2.75 3Z" fill="#a0a0a0"/></g></svg>
<div class="a" style="left:5px;top:69px;width:321px;height:339px;border:2px solid #ff8c00"></div>
<div class="a" style="left:341px;top:67px;width:255px;height:261px;border:2px solid #00b2fa"></div>
<div class="a" style="left:335px;top:352px;width:262px;height:56px;border:2px solid #93d044"></div>
<svg class="a" style="left:0;top:0" width="600" height="450"><path d="M1 14.6H89.8L132.3 69" stroke="#ff8c00" stroke-width="1.3" fill="none"/><path d="M589.5 16.5H479.5L446 67.5" stroke="#00b2fa" stroke-width="1.3" fill="none"/><path d="M358 449.5H475L509.5 407.5" stroke="#93d044" stroke-width="1.2" fill="none"/></svg>
<div class="ann" style="left:0.5px;top:-2px">Objects pane</div>
<div class="ann" style="left:494px;top:1px">Members pane</div>
<div class="ann" style="left:358.5px;top:433px">Description pane</div></body></html>
